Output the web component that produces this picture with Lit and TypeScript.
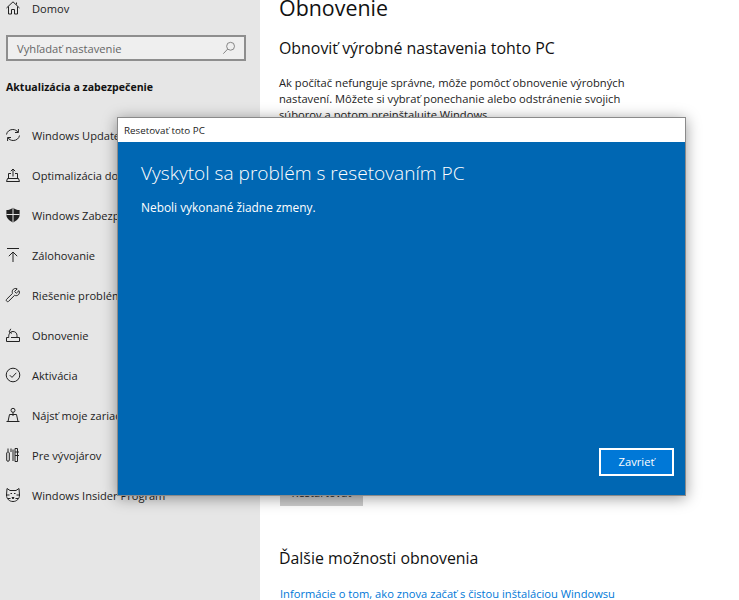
import { LitElement, html, css, svg } from "lit";
import { customElement } from "lit/decorators.js";

const icons: Record<string, unknown> = {
  home: svg`<path d="M1.500 8 8 1.800 14.500 8M3.500 6.500V14H6.500V9.500H9.500V14H12.500V6.500M11.500 2.500V4.500"/>`,
  sync: svg`<path d="M1.500 7.500C2 4.500 4.600 2.500 7.800 2.500 10 2.500 12 3.600 13 5.200M14.500 8.500C14 11.500 11.400 13.500 8.200 13.500 6 13.500 4 12.400 3 10.800M13.400 2V5.500H10M2.600 14V10.500H6"/>`,
  delivery: svg`<path d="M3.500 11.500V6.500H6M12.500 11.500V6.500H10M8 9.500V2M5.800 4.200 8 2 10.200 4.200M1.500 14.500H14.500L13.500 11.500H2.500Z"/>`,
  shield: svg`<path fill="currentColor" stroke="none" d="M8 .8C6 2.400 3.800 3 1.400 3.100V8C1.400 11.200 4.400 13.800 8 15.400 11.600 13.800 14.600 11.200 14.600 8V3.100C12.200 3 10 2.400 8 .8Z"/><path stroke="#e6e6e6" d="M8 .8V15.400M1.400 7.500H14.600"/>`,
  backup: svg`<path d="M2 1.500H14M8 15V5M3.800 9.200 8 5 12.200 9.200"/>`,
  wrench: svg`<path d="M14 3.600 11.300 6.200 9.600 4.500 12.200 1.900C10.400 1 8.400 1.600 7.600 3.200 7.100 4.200 7.100 5.400 7.600 6.300L1.700 12.200C1.100 12.800 1.100 13.600 1.700 14.200 2.300 14.800 3.100 14.800 3.700 14.200L9.600 8.300C10.600 8.800 11.800 8.800 12.800 8.200 14.300 7.400 14.900 5.400 14 3.600Z"/>`,
  recovery: svg`<path d="M1.500 14.500H14.500V10.500H12M1.500 14.500V10.500H3.800C3.300 7.300 5 4.500 8 4.500 10.400 4.500 12 6.200 12 8.500V10.500H6M5.800 1.800 4 5 7 6.300"/>`,
  check: svg`<circle cx="8" cy="8" r="6.800"/><path d="M4.800 8.200 7 10.400 11.300 5.800"/>`,
  find: svg`<circle cx="8" cy="3.300" r="2"/><path d="M8 5.300V9M4.500 7.500H11.500L13 14.500H3L4.500 7.500ZM1.500 14.500H14.500"/>`,
  dev: svg`<path d="M3 1.500V4.500L4.300 6V13C4.300 14.800 1.700 14.800 1.700 13V6L3 4.500M6 1.500V5M10 1.500H12.500V14.500H10ZM10 5H14M10 8.500H14M8 2.500V14"/>`,
  insider: svg`<path d="M2 1.500 5 3.500H11L14 1.500 14.500 8C14.500 12 11.500 14.500 8 14.500 4.500 14.500 1.500 12 1.500 8ZM1.500 8H4.500M11.500 8H14.500M3 11.500H5.500M10.500 11.500H13M5.500 6.500H7M9 6.500H10.500M7 10.500H9L8 12Z"/>`,
};

const nav: [string, string][] = [
  ["sync", "Windows Update"],
  ["delivery", "Optimalizácia doručenia"],
  ["shield", "Windows Zabezpečenie"],
  ["backup", "Zálohovanie"],
  ["wrench", "Riešenie problémov"],
  ["recovery", "Obnovenie"],
  ["check", "Aktivácia"],
  ["find", "Nájsť moje zariadenie"],
  ["dev", "Pre vývojárov"],
  ["insider", "Windows Insider Program"],
];

const icon = (n: string) =>
  html`<svg class="ic" viewBox="0 0 16 16">${icons[n]}</svg>`;

@customElement("app-root")
export class AppRoot extends LitElement {
  static styles = css`
    :host {
      display: block;
      position: relative;
      width: 739px;
      height: 600px;
      overflow: hidden;
      background: #fff;
      font-family: "Open Sans", "Liberation Sans", sans-serif;
      color: #1a1a1a;
    }
    .layout { display: flex; height: 600px; }
    .side {
      width: 260px;
      flex: none;
      background: #e6e6e6;
      box-sizing: border-box;
      overflow: hidden;
    }
    .ic {
      width: 16px;
      height: 16px;
      flex: none;
      fill: none;
      stroke: currentColor;
      stroke-width: 1;
      color: #222;
    }
    .row {
      display: flex;
      align-items: center;
      gap: 11px;
      height: 40px;
      padding-left: 5px;
      font-size: 11.1px;
      color: #222;
      white-space: nowrap;
    }
    .home { margin-top: -12px; }
    .search {
      display: flex;
      align-items: center;
      justify-content: space-between;
      box-sizing: border-box;
      width: 240px;
      height: 26px;
      margin: 7px 0 0 6px;
      padding: 0 8px 0 9px;
      border: 2px solid #8e8e8e;
      background: #efefef;
      font-size: 11.2px;
      color: #666;
    }
    .search .ic { width: 14px; height: 14px; color: #777; }
    .cat {
      margin: 18px 0 0 6px;
      height: 16px;
      line-height: 16px;
      font-size: 10.55px;
      font-weight: 700;
      color: #111;
    }
    .nav { margin-top: 20px; }
    .main {
      flex: 1;
      padding-left: 19px;
      overflow: hidden;
    }
    h1 {
      margin: -8px 0 0;
      font-size: 21.4px;
      line-height: 32px;
      font-weight: 400;
      color: #111;
    }
    h2 {
      margin: 0;
      font-size: 15.9px;
      line-height: 22px;
      font-weight: 400;
      color: #111;
    }
    .h-a { margin-top: 13px; }
    p {
      margin: 16px 0 0;
      width: 360px;
      font-size: 11.2px;
      line-height: 16px;
      color: #222;
    }
    .restart {
      box-sizing: border-box;
      width: 83px;
      height: 32px;
      margin-top: 351px;
      margin-left: 1px;
      padding-top: 11px;
      background: #cccccc;
      font-size: 11.2px;
      text-align: center;
      color: #222;
    }
    .h-b { margin-top: 41px; }
    .link {
      margin: 17px 0 0 1px;
      font-size: 11.15px;
      line-height: 16px;
      color: #0078d7;
      white-space: nowrap;
    }
    .dialog {
      position: absolute;
      left: 117px;
      top: 117px;
      width: 569px;
      height: 379px;
      box-sizing: border-box;
      border: 1px solid #8a8a8a;
      display: flex;
      flex-direction: column;
      background: #0067b3;
      box-shadow: 0 2px 14px rgba(0, 0, 0, 0.4);
      color: #fff;
    }
    .title {
      height: 24px;
      flex: none;
      background: #fff;
      color: #222;
      font-size: 9.8px;
      line-height: 25px;
      padding-left: 6px;
    }
    .body {
      flex: 1;
      display: flex;
      flex-direction: column;
      padding: 17px 11px 19px 23px;
    }
    .msg {
      font-size: 19.1px;
      line-height: 28px;
      font-weight: 300;
    }
    .sub {
      margin-top: 12px;
      font-size: 11.9px;
      line-height: 16px;
    }
    .close {
      margin-top: auto;
      align-self: flex-end;
      box-sizing: border-box;
      width: 75px;
      height: 28px;
      border: 2px solid #fff;
      background: #0078d7;
      font-size: 11.2px;
      line-height: 24px;
      text-align: center;
    }
  `;

  render() {
    return html`
      <div class="layout">
        <div class="side">
          <div class="row home">${icon("home")}<span>Domov</span></div>
          <div class="search">
            <span>Vyhľadať nastavenie</span>
            <svg class="ic" viewBox="0 0 16 16"><circle cx="9.800" cy="6" r="4.500"/><path d="M6.500 9.200 1.500 14.500"/></svg>
          </div>
          <div class="cat">Aktualizácia a zabezpečenie</div>
          <div class="nav">
            ${nav.map(([i, t]) => html`<div class="row">${icon(i)}<span>${t}</span></div>`)}
          </div>
        </div>
        <div class="main">
          <h1>Obnovenie</h1>
          <h2 class="h-a">Obnoviť výrobné nastavenia tohto PC</h2>
          <p>Ak počítač nefunguje správne, môže pomôcť obnovenie výrobných nastavení. Môžete si vybrať ponechanie alebo odstránenie svojich súborov a potom preinštalujte Windows.</p>
          <div class="restart">Restartovať</div>
          <h2 class="h-b">Ďalšie možnosti obnovenia</h2>
          <div class="link">Informácie o tom, ako znova začať s čistou inštaláciou Windowsu</div>
        </div>
      </div>
      <div class="dialog">
        <div class="title">Resetovať toto PC</div>
        <div class="body">
          <div class="msg">Vyskytol sa problém s resetovaním PC</div>
          <div class="sub">Neboli vykonané žiadne zmeny.</div>
          <div class="close">Zavrieť</div>
        </div>
      </div>
    `;
  }
}
